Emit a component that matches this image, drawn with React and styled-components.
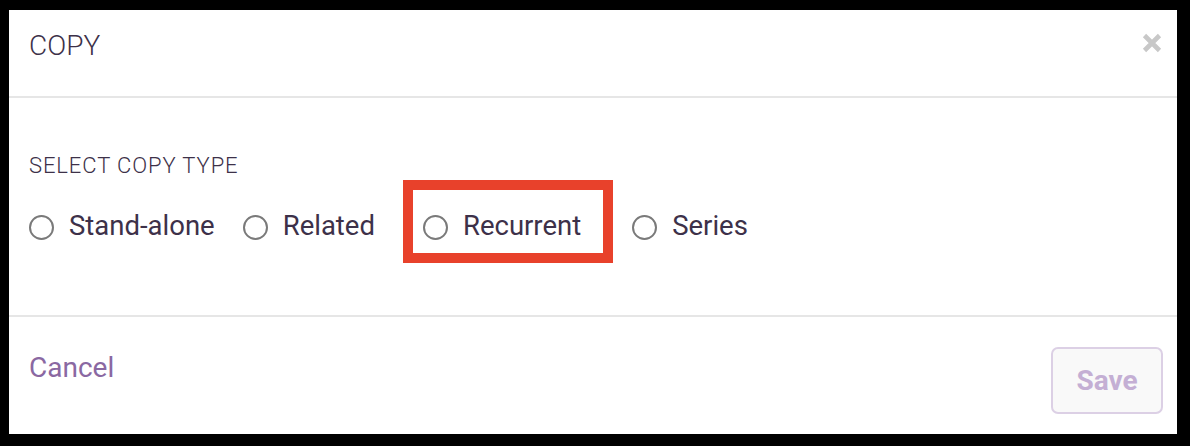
import React from "react";
import styled, { createGlobalStyle } from "styled-components";

const Global = createGlobalStyle`
  html, body { margin: 0; padding: 0; background: #000; }
  body { font-family: Roboto, "Noto Sans", Arial, sans-serif; width: 1190px; height: 446px; overflow: hidden; }
`;

const Frame = styled.div`
  padding: 10px 13px 12px 9px;
  box-sizing: border-box;
  width: 1190px;
  height: 446px;
`;

const Card = styled.div`
  background: #fff;
  width: 1168px;
  height: 424px;
  display: flex;
  flex-direction: column;
`;

const Header = styled.div`
  height: 86px;
  box-sizing: content-box;
  display: flex;
  justify-content: space-between;
  align-items: flex-start;
  padding: 0 15px 0 20px;
  border-bottom: 2px solid #e6e6e6;
`;

const Title = styled.h2`
  margin: 22px 0 0;
  font-size: 28px;
  line-height: 28px;
  font-weight: 300;
  color: #3d3149;
`;

const Close = styled.button`
  margin-top: 23px;
  padding: 0;
  border: 0;
  background: none;
  width: 20px;
  height: 20px;
  cursor: pointer;
  svg { display: block; }
`;

const Body = styled.div`
  height: 219px;
  padding: 57px 20px 0;
  box-sizing: border-box;
  border-bottom: 2px solid #e6e6e6;
`;

const Label = styled.div`
  font-size: 22px;
  line-height: 21px;
  font-weight: 300;
  letter-spacing: 0.9px;
  color: #3d3149;
  margin-bottom: 4px;
`;

const Radios = styled.div`
  display: flex;
  align-items: flex-start;
`;

const Option = styled.label`
  display: flex;
  align-items: flex-start;
  gap: 15px;
  margin-top: ${(p) => (p.$boxed ? "0" : "30px")};
  margin-right: ${(p) => p.$gap}px;
  cursor: pointer;
`;

const Circle = styled.span`
  width: 25px;
  height: 25px;
  box-sizing: border-box;
  border: 2px solid #7a7a7a;
  border-radius: 50%;
  margin-top: 5px;
  flex: none;
`;

const OptionText = styled.span`
  font-size: 27.5px;
  line-height: 32px;
  color: #3d3149;
`;

const Highlight = styled.div`
  border: 10px solid #e8412b;
  padding: 20px 22px 11px 10px;
  margin-right: 19px;
`;

const Footer = styled.div`
  flex: 1;
  display: flex;
  justify-content: space-between;
  align-items: flex-start;
  padding: 0 14px 0 20px;
`;

const Cancel = styled.button`
  margin-top: 37px;
  padding: 0;
  border: 0;
  background: none;
  font-family: inherit;
  font-size: 28px;
  line-height: 28px;
  color: #8a68a2;
  cursor: pointer;
`;

const Save = styled.button`
  margin-top: 30px;
  width: 112px;
  height: 67px;
  box-sizing: border-box;
  border: 2px solid #dcd0e5;
  border-radius: 7px;
  background: #f9f9f9;
  font-family: inherit;
  font-size: 28px;
  line-height: 28px;
  font-weight: 700;
  color: #c4afd4;
  padding: 0;
`;

const options = [
  { label: "Stand-alone", gap: 28 },
  { label: "Related", gap: 28 },
  { label: "Recurrent", boxed: true },
  { label: "Series", gap: 0 },
];

export default function App() {
  return (
    <>
      <Global />
      <Frame>
        <Card>
          <Header>
            <Title>COPY</Title>
            <Close aria-label="Close">
              <svg width="20" height="20" viewBox="0 0 20 20">
                <path d="M2.5 2.5 L17.5 17.5 M17.5 2.5 L2.5 17.5" stroke="#c8c8c8" strokeWidth="4.6" strokeLinecap="butt" />
              </svg>
            </Close>
          </Header>
          <Body>
            <Label>SELECT COPY TYPE</Label>
            <Radios>
              {options.map((o) =>
                o.boxed ? (
                  <Highlight key={o.label}>
                    <Option $boxed $gap={0}>
                      <Circle />
                      <OptionText>{o.label}</OptionText>
                    </Option>
                  </Highlight>
                ) : (
                  <Option key={o.label} $gap={o.gap}>
                    <Circle />
                    <OptionText>{o.label}</OptionText>
                  </Option>
                )
              )}
            </Radios>
          </Body>
          <Footer>
            <Cancel>Cancel</Cancel>
            <Save disabled>Save</Save>
          </Footer>
        </Card>
      </Frame>
    </>
  );
}
